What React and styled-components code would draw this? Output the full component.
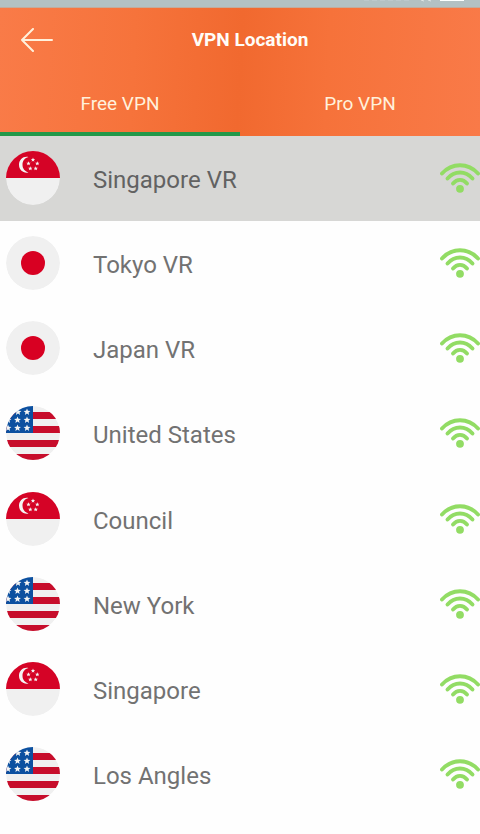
import React, { useState } from "react";
import styled, { createGlobalStyle } from "styled-components";

const GlobalStyle = createGlobalStyle`
  * {
    box-sizing: border-box;
  }
  body {
    margin: 0;
    background-color: #fefefe;
    font-family: Roboto, "Liberation Sans", sans-serif;
  }
`;

const StyledPage = styled.div`
  display: flex;
  flex-direction: column;
  min-height: 100vh;
`;

const StyledStatusBar = styled.div`
  display: flex;
  justify-content: flex-end;
  height: 8px;
  padding-right: 8px;
  background-color: #b3c1c3;
  border-bottom: 1px solid #c3ab9c;
  overflow: hidden;
`;

const StyledHeader = styled.header`
  background: linear-gradient(
    93deg,
    #f97b48 0%,
    #f6733b 28%,
    #f1692f 50%,
    #f6723a 68%,
    #f97a48 100%
  );
  color: #fff1dc;
`;

const StyledTitleBar = styled.div`
  display: grid;
  grid-template-columns: 72px 1fr 52px;
  align-items: center;
  height: 64px;
  padding: 0 6px;
`;

const StyledBack = styled.button`
  display: flex;
  justify-content: flex-start;
  padding: 0 0 0 14px;
  border: none;
  background: none;
  color: inherit;
  cursor: pointer;
`;

const StyledTitle = styled.h1`
  margin: 0;
  font-size: 19px;
  line-height: 24px;
  font-weight: 700;
  text-align: center;
  color: #fffdf8;
`;

const StyledTabs = styled.div`
  display: flex;
`;

const StyledTab = styled.button`
  flex: 1;
  height: 64px;
  padding: 4px 0 0;
  border: none;
  border-bottom: 4px solid ${(props) => (props.$active ? "#22984a" : "transparent")};
  background: none;
  color: inherit;
  font-family: inherit;
  font-size: 19px;
  line-height: 24px;
  cursor: pointer;
`;

const StyledList = styled.ul`
  flex: 1;
  display: grid;
  grid-auto-rows: 1fr;
  margin: 0;
  padding: 0 0 16px;
  list-style-type: none;
`;

const StyledRow = styled.button`
  display: flex;
  align-items: center;
  width: 100%;
  height: 100%;
  min-height: 72px;
  padding: 0 0 2px 6px;
  border: none;
  background-color: ${(props) => (props.$selected ? "#d7d7d5" : "transparent")};
  color: ${(props) => (props.$selected ? "#626262" : "#727272")};
  font-family: inherit;
  font-size: 24px;
  line-height: 32px;
  text-align: left;
  cursor: pointer;
`;

const StyledName = styled.span`
  flex: 1;
  padding: 4px 0 0 33px;
`;

const StyledFlag = styled.svg`
  flex: none;
  width: 54px;
  height: 54px;
  border-radius: 50%;
`;

const locations = [
  { name: "Singapore VR", country: "sg" },
  { name: "Tokyo VR", country: "jp" },
  { name: "Japan VR", country: "jp" },
  { name: "United States", country: "us" },
  { name: "Council", country: "sg" },
  { name: "New York", country: "us" },
  { name: "Singapore", country: "sg" },
  { name: "Los Angles", country: "us" },
];

const Star = ({ x, y, r }) => {
  const points = Array.from({ length: 10 }, (_, i) => {
    const radius = i % 2 ? r * 0.45 : r;
    const angle = (Math.PI * i) / 5;
    return `${x + radius * Math.sin(angle)},${y - radius * Math.cos(angle)}`;
  });
  return <polygon points={points.join(" ")} fill="#f4f4f4" />;
};

const Singapore = () => (
  <>
    <path d="M0 0H54V27H0Z" fill="#d50326" />
    <path
      d="M22.5 6C17.5 4.8 13 8.600 13 13.700C13 18.900 17.5 22.600 22.5 21.400C18.800 20.400 16.500 17.500 16.500 13.700C16.500 9.900 18.800 7 22.5 6Z"
      fill="#f4f4f4"
    />
    <Star x={27} y={8.8} r={2.3} />
    <Star x={22.5} y={12.5} r={2.3} />
    <Star x={31.3} y={12.5} r={2.3} />
    <Star x={24.3} y={17.5} r={2.3} />
    <Star x={29.7} y={17.5} r={2.3} />
  </>
);

const Japan = () => <circle cx={27} cy={27} r={12} fill="#d80022" />;

const UnitedStates = () => (
  <>
    <path
      d="M0 6H54V13H0ZM0 20H54V27H0ZM0 34H54V41H0ZM0 48H54V54H0Z"
      fill="#c70d2b"
    />
    <path d="M0 0H27V27H0Z" fill="#0c50a0" />
    <Star x={21} y={6} r={3.6} />
    <Star x={12} y={6} r={3.6} />
    <Star x={2} y={14} r={3.6} />
    <Star x={11.5} y={14} r={3.6} />
    <Star x={21} y={14} r={3.6} />
    <Star x={2} y={22} r={3.6} />
    <Star x={11.5} y={22} r={3.6} />
    <Star x={21} y={22} r={3.6} />
  </>
);

const flags = { sg: Singapore, jp: Japan, us: UnitedStates };

const Flag = ({ country }) => {
  const Design = flags[country];
  return (
    <StyledFlag viewBox="0 0 54 54" aria-hidden="true">
      <circle cx={27} cy={27} r={27} fill="#f0f0f0" />
      <Design />
    </StyledFlag>
  );
};

const Signal = () => (
  <svg width="40" height="30" viewBox="0 0 40 30" aria-hidden="true">
    <g fill="none" stroke="#92dc64" strokeWidth="3.9" strokeLinecap="round">
      <path d="M2 10.500C12 -0.500 28 -0.500 38 10.500" />
      <path d="M7.500 15.500C14.500 7.500 25.500 7.500 32.500 15.500" />
      <path d="M13 20.500C17 15.700 23 15.700 27 20.500" />
    </g>
    <circle cx={20} cy={25.8} r={3.9} fill="#92dc64" />
  </svg>
);

const StatusIcons = () => (
  <svg width="112" height="7" viewBox="0 0 112 7" aria-hidden="true">
    <path d="M4 0H50" stroke="#c6cfd6" strokeWidth="1" strokeDasharray="5 3" />
    <path d="M61 0L64 1M68 0L71 1" stroke="#dfe6e6" strokeWidth="1" />
    <path d="M80 0H104V1H80Z" fill="#fcffff" />
  </svg>
);

const App = () => {
  const [tab, setTab] = useState("Free VPN");
  const [selected, setSelected] = useState("Singapore VR");

  return (
    <>
      <GlobalStyle />
      <StyledPage>
        <StyledStatusBar>
          <StatusIcons />
        </StyledStatusBar>
        <StyledHeader>
          <StyledTitleBar>
            <StyledBack aria-label="Back">
              <svg width="34" height="24" viewBox="0 0 34 24" fill="none">
                <path
                  d="M32 12H2M13 1L2 12L13 23"
                  stroke="currentColor"
                  strokeWidth="2"
                  strokeLinecap="round"
                  strokeLinejoin="round"
                />
              </svg>
            </StyledBack>
            <StyledTitle>VPN Location</StyledTitle>
          </StyledTitleBar>
          <StyledTabs role="tablist">
            {["Free VPN", "Pro VPN"].map((label) => (
              <StyledTab
                key={label}
                role="tab"
                aria-selected={tab === label}
                $active={tab === label}
                onClick={() => setTab(label)}
              >
                {label}
              </StyledTab>
            ))}
          </StyledTabs>
        </StyledHeader>
        <StyledList>
          {locations.map(({ name, country }) => (
            <li key={name}>
              <StyledRow
                $selected={selected === name}
                onClick={() => setSelected(name)}
              >
                <Flag country={country} />
                <StyledName>{name}</StyledName>
                <Signal />
              </StyledRow>
            </li>
          ))}
        </StyledList>
      </StyledPage>
    </>
  );
};

export default App;
